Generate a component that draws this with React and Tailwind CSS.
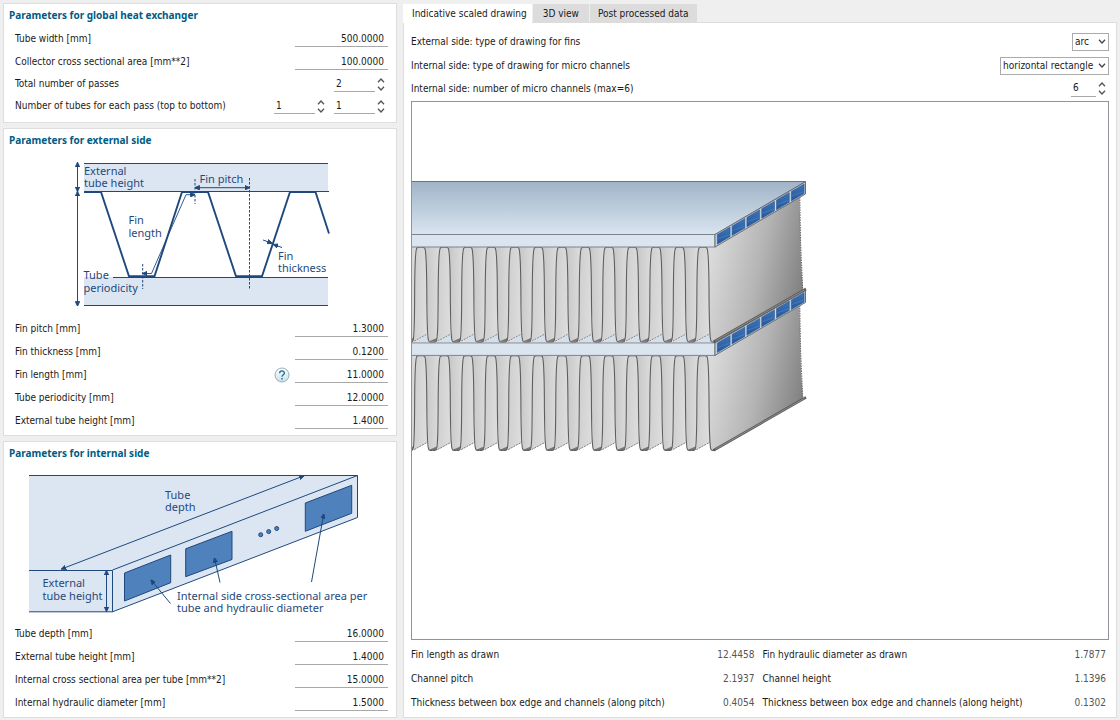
import React, { useState } from 'react';

const INK = '#1f497d';

function Panel({ title, children }) {
  return (
    <section className="border border-[#dedede] bg-white pt-[3px] pb-[3px]">
      <h2 className="px-[5px] font-['Noto_Sans',sans-serif] text-[10px] leading-4 font-bold text-[#005b82]">{title}</h2>
      {children}
    </section>
  );
}

function NumberRow({ id, label, value, help }) {
  return (
    <div className="flex h-[23px] items-center pr-2 pl-[11px]">
      <label htmlFor={id} className="flex-1 whitespace-nowrap">{label}</label>
      {help && (
        <button type="button" aria-label="Help" className="mr-[5px] size-4 shrink-0">
          <HelpIcon />
        </button>
      )}
      <input id={id} defaultValue={value} className="h-[17px] w-[93px] border-b border-[#a8a8a8] bg-transparent pr-1 text-right outline-none" />
    </div>
  );
}

function HelpIcon() {
  return (
    <svg viewBox="0 0 16 16" className="block size-4" fill="none">
      <defs>
        <linearGradient id="help" x1="0" y1="0" x2="0" y2="1">
          <stop offset="0" stopColor="#ffffff" />
          <stop offset="1" stopColor="#c9e0ec" />
        </linearGradient>
      </defs>
      <circle cx="8" cy="8" r="7" fill="url(#help)" stroke="#98aebb" />
      <path d="M5.6 6.2C5.6 3.2 10.4 3.2 10.4 6C10.4 7.8 8 7.8 8 9.8" stroke="#1b6f92" strokeWidth="1.3" />
      <rect x="7.3" y="11" width="1.4" height="1.5" fill="#1b6f92" />
    </svg>
  );
}

function Spin({ label, id, initial, wide }) {
  const [value, setValue] = useState(initial);
  const step = (d) => setValue((v) => Math.max(1, Number(v) + d));
  return (
    <div className="flex items-center">
      <input
        id={id}
        aria-label={label}
        value={value}
        onChange={(e) => setValue(e.target.value)}
        className={`h-4 border-b border-[#a8a8a8] bg-transparent pl-0.5 outline-none ${wide ? 'w-[41px]' : 'w-[25px]'}`}
      />
      <div className="flex w-[11px] flex-col items-center gap-[3px]">
        <button type="button" aria-label="Increase" onClick={() => step(1)} className="block">
          <svg viewBox="0 0 8 5" className="block h-[5px] w-2" fill="none" stroke="#555" strokeWidth="1.3"><path d="M1 4.2L4 1L7 4.2" /></svg>
        </button>
        <button type="button" aria-label="Decrease" onClick={() => step(-1)} className="block">
          <svg viewBox="0 0 8 5" className="block h-[5px] w-2" fill="none" stroke="#555" strokeWidth="1.3"><path d="M1 0.8L4 4L7 0.8" /></svg>
        </button>
      </div>
    </div>
  );
}

function Choice({ id, options, narrow }) {
  return (
    <div className="relative flex">
      <select id={id} className={`h-[18px] appearance-none border border-[#ababab] bg-white pl-0.5 outline-none ${narrow ? 'w-[37px]' : 'w-[109px]'}`}>
        {options.map((o) => <option key={o}>{o}</option>)}
      </select>
      <svg viewBox="0 0 8 5" className="pointer-events-none absolute top-[6px] right-[3px] h-[5px] w-2" fill="none" stroke="#444" strokeWidth="1.3"><path d="M1 0.8L4 4L7 0.8" /></svg>
    </div>
  );
}

function ArrowMarker({ id }) {
  return (
    <marker id={id} viewBox="0 0 6 6" refX="5.5" refY="3" markerWidth="5" markerHeight="5" markerUnits="userSpaceOnUse" orient="auto-start-reverse">
      <path d="M0 0.3L6 3L0 5.7Z" fill={INK} />
    </marker>
  );
}

function Caption({ x, y, lines }) {
  return (
    <text x={x} y={y}>
      {lines.map((l, i) => <tspan key={l} x={x} y={y + i * 12.5}>{l}</tspan>)}
    </text>
  );
}

function ExternalDiagram() {
  const both = { markerStart: 'url(#ext)', markerEnd: 'url(#ext)' };
  return (
    <svg viewBox="4 148 392 169" className="block h-[169px] w-full font-['Noto_Sans',sans-serif] text-[11px]" fill="none" stroke={INK}>
      <defs><ArrowMarker id="ext" /></defs>
      <rect x="84" y="163" width="244" height="28.5" fill="#dce6f2" stroke="none" />
      <rect x="84" y="277" width="244" height="28.5" fill="#dce6f2" stroke="none" />
      <path d="M84 163.5H328M84 191.5H329M113 277.5H328M84 305.5H328" />
      <path d="M77.5 162.5V191.5" {...both} />
      <path d="M77.5 191.5V306" {...both} />
      <path d="M84 192H101L129 276.3H154.5L182 192H208L236 276.3H262L290 192H315.5L329 233.5" strokeWidth="1.9" />
      <path d="M195 179V204M249.5 178V290M142.7 264V289" strokeDasharray="2.5 1.5" />
      <path d="M195 187.7H249.5" {...both} />
      <path d="M142.7 273.5H151.5L186 194.7H195" strokeWidth="0.9" {...both} />
      <path d="M263 240L272 243.2" markerEnd="url(#ext)" />
      <path d="M282 247.5L273.5 244.6" markerEnd="url(#ext)" />
      <g fill={INK} stroke="none">
        <Caption x={84} y={174.5} lines={['External', 'tube height']} />
        <Caption x={199.5} y={183} lines={['Fin pitch']} />
        <Caption x={128.5} y={224} lines={['Fin', 'length']} />
        <Caption x={278} y={259.5} lines={['Fin', 'thickness']} />
        <Caption x={83.5} y={279} lines={['Tube', 'periodicity']} />
      </g>
    </svg>
  );
}

function InternalDiagram() {
  return (
    <svg viewBox="4 461 392 161" className="block h-[161px] w-full font-['Noto_Sans',sans-serif] text-[11px]" fill="none" stroke={INK}>
      <defs><ArrowMarker id="int" /></defs>
      <path d="M29 475.5H357.5V517.5L112.5 611.8H29Z" fill="#dce6f2" stroke="none" />
      <path d="M29 475.5H357.5V517.5L112.5 611.8H29M29 570.5H112.5V611.8M112.5 570L357.5 475.5" />
      <path d="M61.5 569L304 475.8" markerStart="url(#int)" markerEnd="url(#int)" />
      <path d="M106.5 570.5V611.5" markerStart="url(#int)" markerEnd="url(#int)" />
      <g fill="#4f81bd">
        <path d="M124.5 573L170.7 555V582.7L124.5 601Z" />
        <path d="M185.7 548.8L232 531.3V559.5L185.7 576.7Z" />
        <path d="M305.3 503L351.7 485.3V513.3L305.3 531.3Z" />
        <circle cx="260.7" cy="534.7" r="2" />
        <circle cx="268.7" cy="531.6" r="2" />
        <circle cx="276.7" cy="528.5" r="2" />
      </g>
      <path d="M170.5 603.5L151 580" markerEnd="url(#int)" />
      <path d="M220 582.5L214.5 558" markerEnd="url(#int)" />
      <path d="M311.5 582L323.7 514" markerEnd="url(#int)" />
      <g fill={INK} stroke="none">
        <Caption x={165} y={498.5} lines={['Tube', 'depth']} />
        <Caption x={42.5} y={587} lines={['External', 'tube height']} />
        <Caption x={177} y={599.5} lines={['Internal side cross-sectional area per', 'tube and hydraulic diameter']} />
      </g>
    </svg>
  );
}

const FIN_PITCH = 23.52;
const FIN_COUNT = 14;
const CHANNELS = [0, 1, 2, 3, 4, 5];

function FinTier({ first }) {
  const fins = Array.from({ length: FIN_COUNT }, (_, i) => 397.2 + i * FIN_PITCH);
  return (
    <g strokeLinejoin="round">
      <path d="M705 247H714.5L799.5 196L801 262L803 291L714.5 342H709Z" fill="url(#side)" />
      <path d="M799.8 197L800.5 240L802.8 291" stroke="#666" strokeDasharray="1.5 1" />
      <path d="M713.5 342L806 289" stroke="#5c5c5c" strokeWidth="2.6" />
      <path d="M715.5 340.8L804.5 289.9" stroke="#999" strokeWidth="0.8" />
      {fins.map((x, i) => (
        <g key={x}>
          {i < FIN_COUNT - 1 && <path d={`M${x + 4} 247H${x + 20}L${x + 16} 342H${x + 8}Z`} fill="url(#gap)" />}
          <path d={`M${x - 6.6} 342L${x + 6.8} 334.3L${x + 8} 342Z`} fill={first ? '#d3dfec' : '#ffffff'} />
          <path d={`M${x - 3.5} 247.5H${x + 3.5}Q${x + 5.5} 255 ${x + 5.8} 290L${x + 6.8} 334L${x - 6.8} 341.5Q${x - 6} 330 ${x - 5.8} 290Q${x - 5.5} 255 ${x - 3.5} 247.5Z`} fill="url(#fin)" />
          {i < FIN_COUNT - 1 && <path d={`M${x + 8} 341.5L${x + 16} 338V341.5Z`} fill="#777" />}
          <path d={`M${x - 6.6} 341.2L${x + 6.6} 334`} stroke="#777" strokeWidth="0.9" strokeDasharray="2 1" />
          <path
            d={`M${x - 7.5} 340Q${x - 6.3} 335 ${x - 6.1} 300Q${x - 6} 252 ${x - 4} 248.2Q${x - 3.5} 247.3 ${x - 2} 247.3H${x + 2}Q${x + 3.5} 247.3 ${x + 4} 248.2Q${x + 6} 252 ${x + 6.1} 300Q${x + 6.5} 335 ${x + 7.7} 340Q${x + 8} 342 ${x + 9.5} 342H${x + 12}`}
            stroke="#5e5e5e"
            strokeWidth="1.1"
          />
          {i < FIN_COUNT - 1 && <path d={`M${x + 12} 342H${x + 14}Q${x + 15.6} 342 ${x + 16} 340`} stroke="#5e5e5e" strokeWidth="1.1" />}
        </g>
      ))}
    </g>
  );
}

function TubeEnd() {
  return (
    <g>
      <rect x="400" y="234.5" width="315" height="12.5" fill="#dae5f0" stroke="#7b848e" />
      <path d="M715 234.5L805.5 181.8V194L715 247Z" fill="#ccd7e2" stroke="#666d75" />
      {CHANNELS.map((i) => {
        const x = 717.3 + i * 14.8;
        const y = 234.6 - i * 8.62;
        return (
          <g key={i}>
            <path d={`M${x} ${y}L${x + 12.8} ${y - 7.5}V${y + 2.1}L${x} ${y + 9.6}Z`} fill="url(#channel)" stroke="#2a4f80" strokeWidth="0.5" />
            <path d={`M${x + 0.5} ${y + 5}L${x + 12.4} ${y + 1}V${y - 0.6}L${x + 0.5} ${y + 4}Z`} fill="#5b90cb" opacity="0.4" />
          </g>
        );
      })}
    </g>
  );
}

function ScaledDrawing() {
  return (
    <svg viewBox="412 102 696 536" preserveAspectRatio="xMinYMin meet" className="mx-[7px] min-h-0 flex-1 basis-0 border border-[#8e939c] bg-white" fill="none" role="img" aria-label="Scaled drawing of tubes and fins">
      <defs>
        <linearGradient id="top" x1="0" y1="0" x2="0" y2="1">
          <stop offset="0" stopColor="#a0b4c8" />
          <stop offset="1" stopColor="#d9e4ef" />
        </linearGradient>
        <linearGradient id="side" gradientUnits="userSpaceOnUse" x1="708" y1="270" x2="806" y2="290">
          <stop offset="0" stopColor="#dadada" />
          <stop offset="0.5" stopColor="#b4b4b4" />
          <stop offset="1" stopColor="#7d7d7d" />
        </linearGradient>
        <linearGradient id="fin" x1="0" y1="0" x2="1" y2="0.2">
          <stop offset="0" stopColor="#cecece" />
          <stop offset="1" stopColor="#dcdcdc" />
        </linearGradient>
        <linearGradient id="gap" x1="0" y1="0" x2="1" y2="0">
          <stop offset="0" stopColor="#c6c6c6" />
          <stop offset="1" stopColor="#dedede" />
        </linearGradient>
        <linearGradient id="channel" x1="0" y1="0" x2="0" y2="1">
          <stop offset="0" stopColor="#3d75b8" />
          <stop offset="1" stopColor="#25579b" />
        </linearGradient>
      </defs>
      <g transform="translate(0 108.4)">
        <FinTier />
        <TubeEnd />
      </g>
      <FinTier first />
      <path d="M400 181.5H805.5L715 234.5H400Z" fill="url(#top)" stroke="#6b747d" />
      <TubeEnd />
    </svg>
  );
}

function Stat({ label, value }) {
  return (
    <div className="flex h-6 items-center justify-between">
      <dt className="whitespace-nowrap">{label}</dt>
      <dd className="text-[#555]">{value}</dd>
    </div>
  );
}

const TABS = ['Indicative scaled drawing', '3D view', 'Post processed data'];

export default function App() {
  const [tab, setTab] = useState(0);
  return (
    <main className="grid min-h-screen grid-cols-[394fr_714fr] gap-[6px] bg-[#efefef] p-[3px] font-['DejaVu_Sans_Condensed','DejaVu_Sans',sans-serif] text-[10px] leading-4 text-[#1a1a1a]">
      <div className="flex min-w-0 flex-col gap-[5px]">
        <Panel title="Parameters for global heat exchanger">
          <div className="pt-1 pb-0.5">
            <NumberRow id="tube-width" label="Tube width [mm]" value="500.0000" />
            <NumberRow id="collector" label="Collector cross sectional area [mm**2]" value="100.0000" />
            <div className="flex h-[22px] items-center pr-[10px] pl-[11px]">
              <label htmlFor="passes" className="flex-1">Total number of passes</label>
              <Spin id="passes" initial={2} wide />
            </div>
            <div className="flex h-[22px] items-center gap-2 pr-[10px] pl-[11px]">
              <label htmlFor="tubes-1" className="flex-1 whitespace-nowrap">Number of tubes for each pass (top to bottom)</label>
              <Spin id="tubes-1" initial={1} wide />
              <Spin id="tubes-2" label="Number of tubes, second pass" initial={1} wide />
            </div>
          </div>
        </Panel>
        <Panel title="Parameters for external side">
          <ExternalDiagram />
          <NumberRow id="fin-pitch" label="Fin pitch [mm]" value="1.3000" />
          <NumberRow id="fin-thickness" label="Fin thickness [mm]" value="0.1200" />
          <NumberRow id="fin-length" label="Fin length [mm]" value="11.0000" help />
          <NumberRow id="periodicity" label="Tube periodicity [mm]" value="12.0000" />
          <NumberRow id="ext-height" label="External tube height [mm]" value="1.4000" />
        </Panel>
        <Panel title="Parameters for internal side">
          <InternalDiagram />
          <NumberRow id="depth" label="Tube depth [mm]" value="16.0000" />
          <NumberRow id="int-height" label="External tube height [mm]" value="1.4000" />
          <NumberRow id="int-area" label="Internal cross sectional area per tube [mm**2]" value="15.0000" />
          <NumberRow id="int-diameter" label="Internal hydraulic diameter [mm]" value="1.5000" />
        </Panel>
      </div>

      <div className="flex min-w-0 flex-col">
        <div role="tablist" className="relative z-10 -mb-px flex h-5 gap-px pt-px">
          {TABS.map((t, i) => (
            <button
              key={t}
              type="button"
              role="tab"
              aria-selected={tab === i}
              onClick={() => setTab(i)}
              className={`whitespace-nowrap ${i === 0 ? 'pr-[5px] pl-[9px]' : i === 1 ? 'px-[10px]' : 'px-2'} ${tab === i ? 'bg-white' : 'bg-[#dcdcdc]'}`}
            >
              {t}
            </button>
          ))}
        </div>
        <div className="flex flex-1 flex-col border border-[#dedede] bg-white pt-[7px] pb-[2px]">
          <div className="flex h-6 items-center justify-between px-[7px]">
            <label htmlFor="fin-type">External side: type of drawing for fins</label>
            <Choice id="fin-type" options={['arc', 'line']} narrow />
          </div>
          <div className="flex h-[23px] items-center justify-between px-[7px]">
            <label htmlFor="channel-type">Internal side: type of drawing for micro channels</label>
            <Choice id="channel-type" options={['horizontal rectangle', 'vertical rectangle']} />
          </div>
          <div className="mb-[1px] flex h-[23px] items-center justify-between pr-[9px] pl-[7px]">
            <label htmlFor="channels">Internal side: number of micro channels (max=6)</label>
            <Spin id="channels" initial={6} />
          </div>
          <ScaledDrawing />
          <dl className="mt-[3px] grid grid-cols-2 gap-x-2 pr-[10px] pl-[7px]">
            <Stat label="Fin length as drawn" value="12.4458" />
            <Stat label="Fin hydraulic diameter as drawn" value="1.7877" />
            <Stat label="Channel pitch" value="2.1937" />
            <Stat label="Channel height" value="1.1396" />
            <Stat label="Thickness between box edge and channels (along pitch)" value="0.4054" />
            <Stat label="Thickness between box edge and channels (along height)" value="0.1302" />
          </dl>
        </div>
      </div>
    </main>
  );
}
